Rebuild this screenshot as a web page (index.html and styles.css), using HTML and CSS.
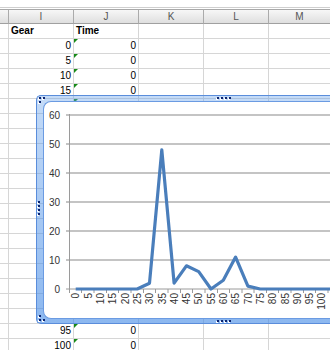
FILE: index.html
```html
<!DOCTYPE html>
<html lang="en">
<head>
    <meta charset="UTF-8">
    <title>Gear / Time</title>
    <link rel="stylesheet" href="styles.css">
</head>
<body>

    <!-- planilha -->
    <div class="sheet">
        <div class="topbar"></div>
        <div class="row head">
            <div class="cell"></div><div class="cell">I</div><div class="cell">J</div><div class="cell">K</div><div class="cell">L</div><div class="cell">M</div>
        </div>
        <div class="row">
            <div class="cell"></div><div class="cell label">Gear</div><div class="cell label">Time</div><div class="cell"></div><div class="cell"></div><div class="cell"></div>
        </div>
        <div class="row"><div class="cell"></div><div class="cell">0</div><div class="cell flag">0</div><div class="cell"></div><div class="cell"></div><div class="cell"></div></div>
        <div class="row"><div class="cell"></div><div class="cell">5</div><div class="cell flag">0</div><div class="cell"></div><div class="cell"></div><div class="cell"></div></div>
        <div class="row"><div class="cell"></div><div class="cell">10</div><div class="cell flag">0</div><div class="cell"></div><div class="cell"></div><div class="cell"></div></div>
        <div class="row"><div class="cell"></div><div class="cell">15</div><div class="cell flag">0</div><div class="cell"></div><div class="cell"></div><div class="cell"></div></div>
        <div class="row"><div class="cell"></div><div class="cell">20</div><div class="cell flag">0</div><div class="cell"></div><div class="cell"></div><div class="cell"></div></div>
        <div class="row"><div class="cell"></div><div class="cell">25</div><div class="cell flag">0</div><div class="cell"></div><div class="cell"></div><div class="cell"></div></div>
        <div class="row"><div class="cell"></div><div class="cell">30</div><div class="cell flag">2</div><div class="cell"></div><div class="cell"></div><div class="cell"></div></div>
        <div class="row"><div class="cell"></div><div class="cell">35</div><div class="cell flag">48</div><div class="cell"></div><div class="cell"></div><div class="cell"></div></div>
        <div class="row"><div class="cell"></div><div class="cell">40</div><div class="cell flag">2</div><div class="cell"></div><div class="cell"></div><div class="cell"></div></div>
        <div class="row"><div class="cell"></div><div class="cell">45</div><div class="cell flag">8</div><div class="cell"></div><div class="cell"></div><div class="cell"></div></div>
        <div class="row"><div class="cell"></div><div class="cell">50</div><div class="cell flag">6</div><div class="cell"></div><div class="cell"></div><div class="cell"></div></div>
        <div class="row"><div class="cell"></div><div class="cell">55</div><div class="cell flag">0</div><div class="cell"></div><div class="cell"></div><div class="cell"></div></div>
        <div class="row"><div class="cell"></div><div class="cell">60</div><div class="cell flag">3</div><div class="cell"></div><div class="cell"></div><div class="cell"></div></div>
        <div class="row"><div class="cell"></div><div class="cell">65</div><div class="cell flag">11</div><div class="cell"></div><div class="cell"></div><div class="cell"></div></div>
        <div class="row"><div class="cell"></div><div class="cell">70</div><div class="cell flag">1</div><div class="cell"></div><div class="cell"></div><div class="cell"></div></div>
        <div class="row"><div class="cell"></div><div class="cell">75</div><div class="cell flag">0</div><div class="cell"></div><div class="cell"></div><div class="cell"></div></div>
        <div class="row"><div class="cell"></div><div class="cell">80</div><div class="cell flag">0</div><div class="cell"></div><div class="cell"></div><div class="cell"></div></div>
        <div class="row"><div class="cell"></div><div class="cell">85</div><div class="cell flag">0</div><div class="cell"></div><div class="cell"></div><div class="cell"></div></div>
        <div class="row"><div class="cell"></div><div class="cell">90</div><div class="cell flag">0</div><div class="cell"></div><div class="cell"></div><div class="cell"></div></div>
        <div class="row"><div class="cell"></div><div class="cell">95</div><div class="cell flag">0</div><div class="cell"></div><div class="cell"></div><div class="cell"></div></div>
        <div class="row"><div class="cell"></div><div class="cell">100</div><div class="cell flag">0</div><div class="cell"></div><div class="cell"></div><div class="cell"></div></div>
    </div>

    <!-- grafico selecionado -->
    <div class="chart">
        <div class="grips corner-tl"><span></span><span></span><span></span><i></i></div>
        <div class="grips corner-bl"><span></span><i></i><span></span><span></span></div>
        <div class="grips top"><span></span><span></span><span></span><span></span></div>
        <div class="grips bottom"><span></span><span></span><span></span><span></span></div>
        <div class="grips left"><span></span><span></span><span></span><span></span></div>

        <div class="plot">
            <svg width="286" height="216" viewBox="44 102 286 216">
                <g class="grid">
                    <line x1="66" y1="115" x2="330" y2="115"/>
                    <line x1="66" y1="144" x2="330" y2="144"/>
                    <line x1="66" y1="173" x2="330" y2="173"/>
                    <line x1="66" y1="202" x2="330" y2="202"/>
                    <line x1="66" y1="231" x2="330" y2="231"/>
                    <line x1="66" y1="260" x2="330" y2="260"/>
                </g>
                <line class="axis" x1="66" y1="289" x2="330" y2="289"/>
                <line class="axis" x1="69.5" y1="114" x2="69.5" y2="293"/>
                <path class="axis" d="M81.5 289v4M94 289v4M106.5 289v4M118.5 289v4M131 289v4M143.5 289v4M155.5 289v4M168 289v4M180.5 289v4M192.5 289v4M205 289v4M217.5 289v4M229.5 289v4M242 289v4M254 289v4M266.5 289v4M278.5 289v4M291 289v4M303.5 289v4M315.5 289v4M328 289v4"/>

                <g class="ylab">
                    <text x="60" y="118.5">60</text>
                    <text x="60" y="147.5">50</text>
                    <text x="60" y="176.5">40</text>
                    <text x="60" y="205.5">30</text>
                    <text x="60" y="234.5">20</text>
                    <text x="60" y="263.5">10</text>
                    <text x="60" y="292.5">0</text>
                </g>

                <g class="xlab">
                    <text transform="translate(79.4,293) rotate(-90)">0</text>
                    <text transform="translate(91.7,293) rotate(-90)">5</text>
                    <text transform="translate(104,293) rotate(-90)">10</text>
                    <text transform="translate(116.3,293) rotate(-90)">15</text>
                    <text transform="translate(128.6,293) rotate(-90)">20</text>
                    <text transform="translate(140.9,293) rotate(-90)">25</text>
                    <text transform="translate(153.2,293) rotate(-90)">30</text>
                    <text transform="translate(165.5,293) rotate(-90)">35</text>
                    <text transform="translate(177.8,293) rotate(-90)">40</text>
                    <text transform="translate(190.1,293) rotate(-90)">45</text>
                    <text transform="translate(202.4,293) rotate(-90)">50</text>
                    <text transform="translate(214.7,293) rotate(-90)">55</text>
                    <text transform="translate(227,293) rotate(-90)">60</text>
                    <text transform="translate(239.3,293) rotate(-90)">65</text>
                    <text transform="translate(251.6,293) rotate(-90)">70</text>
                    <text transform="translate(263.9,293) rotate(-90)">75</text>
                    <text transform="translate(276.2,293) rotate(-90)">80</text>
                    <text transform="translate(288.5,293) rotate(-90)">85</text>
                    <text transform="translate(300.8,293) rotate(-90)">90</text>
                    <text transform="translate(313.1,293) rotate(-90)">95</text>
                    <text transform="translate(325.4,293) rotate(-90)">100</text>
                </g>

                <polyline class="serie" points="75.7,289 88,289 100.3,289 112.6,289 124.9,289 137.2,289 149.5,283.2 161.8,149.8 174.1,283.2 186.4,265.8 198.7,271.6 211,289 223.3,280.3 235.6,257.1 247.9,286.1 260.2,289 272.5,289 284.8,289 297.1,289 309.4,289 321.7,289 330,289"/>
            </svg>
        </div>
    </div>

</body>
</html>
```

FILE: styles.css
```css
* {
    box-sizing: border-box;
}

html, body {
    margin: 0;
    overflow: hidden;
}

body {
    font-family: "Liberation Sans", Arial, sans-serif;
    font-size: 10px;
    color: #000;
    background-color: #fff;
}

.topbar {
    height: 8px;
    border-bottom: 1px solid #cfcfcf;
    margin-bottom: 1px;
}

.row {
    display: grid;
    grid-template-columns: 9px repeat(4, 65px) 61px;
}

.cell {
    position: relative;
    height: 15px;
    line-height: 14px;
    padding: 0 2px;
    text-align: right;
    white-space: nowrap;
    overflow: hidden;
    border-right: 1px solid #d6d6d6;
    border-bottom: 1px solid #d6d6d6;
}

.cell:last-child {
    border-right: none;
}

.head .cell {
    border-top: 1px solid #a8a8a8;
    border-right-color: #ababab;
    border-bottom-color: #a0a0a0;
    line-height: 13px;
    text-align: center;
    color: #555;
    background: linear-gradient(#f7f7f7, #dfdfdf);
}

.label {
    text-align: left;
    font-weight: bold;
}

.flag::before {
    content: "";
    position: absolute;
    left: 0;
    top: 0;
    border-top: 4px solid #178a17;
    border-right: 4px solid transparent;
}

/* moldura do grafico, continua alem da borda direita */
.chart {
    position: absolute;
    left: 36px;
    top: 95px;
    width: 294px;
    height: 229px;
    padding: 5px 0 4px 6px;
    border: 1px solid #5a8ddb;
    border-right: none;
    border-radius: 5px 0 0 5px;
    background: linear-gradient(rgba(100, 160, 235, 0.38), rgba(70, 140, 230, 0.62));
}

.plot {
    height: 218px;
    border: 1px solid #6b9be2;
    border-right: none;
    border-radius: 8px 0 0 8px;
    background-color: #fff;
    overflow: hidden;
}

.plot svg {
    display: block;
}

.grips {
    position: absolute;
    display: flex;
    gap: 2px;
}

.grips span, .grips i {
    width: 2px;
    height: 2px;
    background-color: #0c2470;
    box-shadow: -1px 1px 0 #fff;
}

.grips i {
    background: none;
    box-shadow: none;
}

.grips.top {
    left: 180px;
    top: 1px;
}

.grips.bottom {
    left: 180px;
    top: 224px;
}

.grips.left {
    left: 1px;
    top: 105px;
    flex-direction: column;
}

.corner-tl, .corner-bl {
    width: 6px;
    flex-wrap: wrap;
}

.corner-tl {
    left: 2px;
    top: 1px;
}

.corner-bl {
    left: 2px;
    top: 219px;
}

.grid line {
    stroke: #c4c4c4;
    stroke-width: 2;
}

.axis {
    stroke: #9a9a9a;
    stroke-width: 1;
    fill: none;
}

.ylab text {
    text-anchor: end;
    font-size: 10px;
    fill: #333;
}

.xlab text {
    text-anchor: end;
    font-size: 10px;
    fill: #333;
}

.serie {
    fill: none;
    stroke: #4a7ebb;
    stroke-width: 3.2;
    stroke-linejoin: round;
}
```
